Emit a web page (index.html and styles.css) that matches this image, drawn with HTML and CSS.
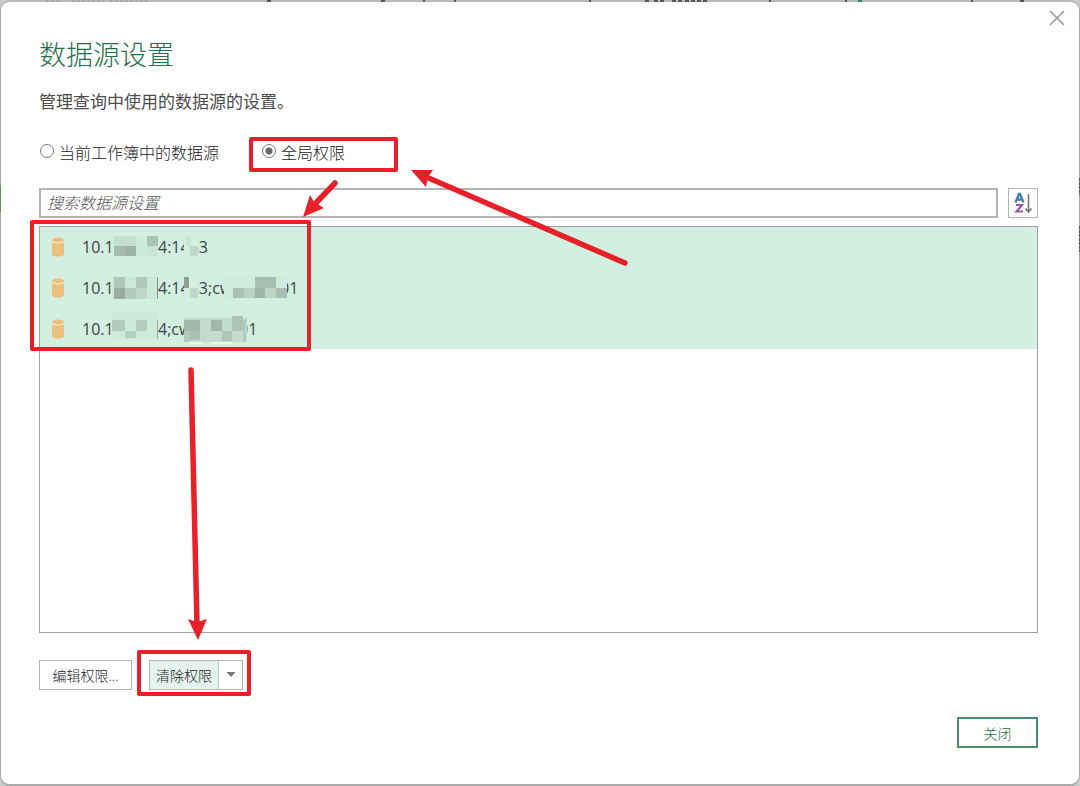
FILE: index.html
```
<!DOCTYPE html>
<html lang="zh-CN">
<head>
    <meta charset="UTF-8">
    <title>数据源设置</title>
    <link rel="stylesheet" href="styles.css">
</head>
<body>
    <main class="dialog">
        <button class="close-x" type="button" aria-label="关闭窗口">
            <svg width="16" height="16" viewBox="0 0 16 16"><path d="M1 1L15 15M15 1L1 15" stroke="#999" stroke-width="1.5" fill="none"/></svg>
        </button>

        <h1>数据源设置</h1>
        <p class="subtitle">管理查询中使用的数据源的设置。</p>

        <div class="scope">
            <label><input type="radio" name="scope" value="workbook"> 当前工作簿中的数据源</label>
            <label><input type="radio" name="scope" value="global" checked> 全局权限</label>
        </div>

        <div class="search">
            <input type="text" aria-label="搜索数据源设置" placeholder="搜索数据源设置">
            <button class="sort" type="button" aria-label="排序">
                <svg width="18" height="22" viewBox="0 0 18 22" fill="none">
                    <path d="M1.500 10.500L5 2H6L9.500 10.500M3 7.500H8" stroke="#4a80b5" stroke-width="2.400"/>
                    <path d="M2 13H8L2.500 19.500H9" stroke="#9556b0" stroke-width="2.200"/>
                    <path d="M14.500 2V19.500M11.500 16.500L14.500 20L17.500 16.500" stroke="#777" stroke-width="1.600"/>
                </svg>
            </button>
        </div>

        <div class="list">
            <ul class="sources">
                <li>
                    <svg class="db" width="14" height="20" viewBox="0 0 14 20"><path d="M1 3V17C1 20.500 13 20.500 13 17V3Z" fill="#ebc07c"/><ellipse cx="7" cy="3" rx="6" ry="2.500" fill="#ebc07c"/><path d="M1 4C3 6.600 11 6.600 13 4" stroke="#f6e2b8" stroke-width="1.300" fill="none"/></svg>
                    <span>10.1</span><span>4:1433</span>
                    <svg class="mosaic" width="190" height="32" viewBox="0 0 190 32">
                        <path d="M3 5H25V15H3Z" fill="#c5dfd1"/><path d="M3 15H25V25H3Z" fill="#a6bbae"/><path d="M14 15H25V25H14Z" fill="#9fb2a7"/>
                        <path d="M25 5H36V25H25Z" fill="#cdebdc"/><path d="M36 5H47V15H36Z" fill="#acc2b5"/><path d="M36 15H47V25H36Z" fill="#c8e4d6"/>
                        <path d="M73 4H87V27H73Z" fill="#d2efe1"/><path d="M79 15H87V25H79Z" fill="#bed8ca"/><path d="M75 5H80V15H75Z" fill="#c7e4d5"/>
                    </svg>
                </li>
                <li>
                    <svg class="db" width="14" height="20" viewBox="0 0 14 20"><path d="M1 3V17C1 20.500 13 20.500 13 17V3Z" fill="#ebc07c"/><ellipse cx="7" cy="3" rx="6" ry="2.500" fill="#ebc07c"/><path d="M1 4C3 6.600 11 6.600 13 4" stroke="#f6e2b8" stroke-width="1.300" fill="none"/></svg>
                    <span>10.1</span><span>4:1433;cw</span><span>01</span>
                    <svg class="mosaic" width="190" height="32" viewBox="0 0 190 32">
                        <path d="M1 5H47V27H1Z" fill="#cbe8da"/><path d="M3 5H14V16H3Z" fill="#afc5b9"/><path d="M3 16H14V27H3Z" fill="#9bada2"/><path d="M14 16H25V27H14Z" fill="#b3cbbd"/><path d="M25 5H36V16H25Z" fill="#b0c8bb"/><path d="M25 16H36V27H25Z" fill="#bdd7c9"/>
                        <path d="M46 5H47V27H46Z" fill="#82928a"/>
                        <path d="M73 4H87V27H73Z" fill="#d2efe1"/><path d="M73 5H78V16H73Z" fill="#8fa097"/><path d="M79 16H87V26H79Z" fill="#bdd7c9"/>
                        <path d="M113 4H176V27H113Z" fill="#d0ecde"/><path d="M122 16H133V26H122Z" fill="#aac0b3"/><path d="M133 16H144V26H133Z" fill="#bad2c5"/><path d="M144 5H165V16H144Z" fill="#a9beb2"/><path d="M144 16H154V26H144Z" fill="#a0b5a9"/><path d="M154 16H165V26H154Z" fill="#bcd5c8"/><path d="M165 16H176V26H165Z" fill="#a8beb1"/>
                    </svg>
                </li>
                <li class="short">
                    <svg class="db" width="14" height="20" viewBox="0 0 14 20"><path d="M1 3V17C1 20.500 13 20.500 13 17V3Z" fill="#ebc07c"/><ellipse cx="7" cy="3" rx="6" ry="2.500" fill="#ebc07c"/><path d="M1 4C3 6.600 11 6.600 13 4" stroke="#f6e2b8" stroke-width="1.300" fill="none"/></svg>
                    <span>10.1</span><span>4;cw</span><span>01</span>
                    <svg class="mosaic" width="190" height="32" viewBox="0 0 190 32">
                        <path d="M1 0H47V26H1Z" fill="#cdeadc"/><path d="M1 7H14V18H1Z" fill="#b2cabc"/><path d="M25 7H36V18H25Z" fill="#b5cdbf"/><path d="M14 18H25V25H14Z" fill="#b6cec1"/><path d="M46 7H47V26H46Z" fill="#98aaa0"/>
                        <path d="M73 5H136V29H73Z" fill="#c2dccf"/><path d="M73 7H89V18H73Z" fill="#a3b7ab"/><path d="M73 18H79V29H73Z" fill="#b1c8bb"/><path d="M79 18H89V27H79Z" fill="#a9bfb2"/><path d="M100 7H111V18H100Z" fill="#a2b6ab"/><path d="M111 18H121V28H111Z" fill="#aec5b8"/><path d="M121 3H132V18H121Z" fill="#aec4b8"/><path d="M132 7H135V29H132Z" fill="#b2cabd"/>
                        <path d="M78 29H91V31H78ZM100 29H122V31H100Z" fill="#e8f7ef"/>
                    </svg>
                </li>
            </ul>
        </div>

        <div class="actions">
            <button class="btn" type="button">编辑权限...</button>
            <div class="split">
                <button type="button" class="clear">清除权限</button>
                <button type="button" class="arrow" aria-label="更多清除选项"><svg width="10" height="6" viewBox="0 0 10 6"><path d="M0.500 0H9.500L5 5Z" fill="#777"/></svg></button>
            </div>
        </div>

        <div class="footer">
            <button class="btn-close" type="button">关闭</button>
        </div>

        <!-- sheet showing behind the dialog edges -->
        <svg class="marks" width="1080" height="786" viewBox="0 0 1080 786" fill="none" aria-hidden="true">
            <path d="M46 1H60M72 1H104M110 1H150" stroke="#999" stroke-width="1" stroke-dasharray="3 2"/>
            <path d="M267 1H271M381 1H385M424 0V2M455 0V2M590 0V2M645 1H649M654 1H664M672 1H682M685 1H708M770 0V2M846 0V2M972 0V2M1020 1H1024" stroke="#555" stroke-width="2" stroke-dasharray="4 2"/>
            <path d="M858 1H862" stroke="#2a8a68" stroke-width="2"/>
            <path d="M0.500 185V212" stroke="#5b9152"/>
            <path d="M1079.500 178V195M1079.500 226V252" stroke="#555" stroke-dasharray="3 1"/>
        </svg>

        <!-- red marks -->
        <svg class="marks" width="1080" height="786" viewBox="0 0 1080 786" fill="none" stroke="#e8202a" aria-hidden="true">
            <g stroke-width="4" stroke-linejoin="round">
                <path d="M251 139H396V170H251Z"/>
                <path d="M32 222H309V349H32Z"/>
                <path d="M139 652H249V694H139Z"/>
            </g>
            <g stroke-width="5.500" stroke-linecap="round">
                <path d="M335 183L314 205"/>
                <path d="M625 263L424 176"/>
                <path d="M191 370L197 624"/>
            </g>
            <g fill="#e8202a" stroke="none">
                <path d="M303 217L310 195L314 202L324 208Z"/>
                <path d="M411 170L433 170L428 177L426 187Z"/>
                <path d="M198 640L188 619L197 622L207 619Z"/>
            </g>
        </svg>
    </main>
</body>
</html>
```
FILE: styles.css
```
* {
    box-sizing: border-box;
}
body {
    margin: 0;
    background: #c9cdca;
    color: #444;
    font-family: "Open Sans", "Noto Sans CJK SC", sans-serif;
    font-size: 16px;
}
button, input {
    font-family: inherit;
    color: inherit;
}
button {
    padding: 0;
    background: #fff;
    border: 1px solid #b4b4b4;
    font-size: 14px;
}
svg {
    display: block;
}
.dialog {
    position: relative;
    display: flex;
    flex-direction: column;
    min-height: 100vh;
    padding: 35px 41px 36px 38px;
    background: #fff;
    border: 1px solid #aaa;
    border-top: 2px solid #b8b8b8;
    border-bottom-width: 2px;
    border-radius: 10px;
}
.close-x {
    position: absolute;
    top: 8px;
    right: 14px;
    border: 0;
}
h1 {
    margin: 0;
    color: #217346;
    font-size: 27px;
    font-weight: 300;
    line-height: 36px;
}
.subtitle {
    margin: 16px 0 0;
    color: #4c4c4c;
    font-size: 17px;
    line-height: 26px;
}
.scope {
    display: flex;
    gap: 42px;
    margin-top: 24px;
    color: #222;
    font-weight: 300;
    line-height: 28px;
}
.scope label {
    display: flex;
    align-items: center;
    gap: 5px;
}
.scope input {
    appearance: none;
    width: 14px;
    height: 14px;
    margin: 0 0 4px 1px;
    border: 1px solid #777;
    border-radius: 50%;
}
.scope input:checked {
    background: radial-gradient(circle, #666 3px, #fff 4px);
}
.search {
    display: flex;
    gap: 10px;
    margin-top: 21px;
}
.search input {
    flex: 1;
    min-width: 0;
    height: 30px;
    padding: 0 6px;
    border: 2px solid #b4b4b4;
    font-size: 16px;
    font-weight: 300;
}
.search input::placeholder {
    color: #555;
    font-style: italic;
}
.sort {
    display: flex;
    align-items: center;
    justify-content: center;
    width: 30px;
    height: 30px;
}
.list {
    flex: 1;
    margin-top: 8px;
    border: 1px solid #a0a0a0;
}
.sources {
    display: grid;
    gap: 1px;
    margin: 0;
    padding: 0;
    list-style: none;
    background: #d2efe1;
}
.sources li {
    position: relative;
    display: grid;
    grid-template-columns: 42px 76px 122px auto;
    align-items: center;
    height: 40px;
}
.sources .short {
    grid-template-columns: 42px 76px 81px auto;
}
.db {
    margin-left: 11px;
}
.mosaic {
    position: absolute;
    left: 71px;
    top: 4px;
}
.actions {
    display: flex;
    gap: 17px;
    margin-top: 27px;
}
.btn {
    width: 93px;
    height: 30px;
    color: #222;
    font-weight: 300;
}
.split {
    display: flex;
    border: 1px solid #b4b4b4;
}
.split button {
    height: 28px;
    border: 0;
}
.split .clear {
    width: 69px;
    background: #e4f4ec;
    border-right: 1px solid #a9d3bd;
    color: #222;
    font-weight: 300;
}
.split .arrow {
    display: flex;
    align-items: center;
    justify-content: center;
    width: 23px;
}
.footer {
    display: flex;
    justify-content: flex-end;
    margin-top: 27px;
}
.btn-close {
    width: 81px;
    height: 31px;
    border: 2px solid #4a8f6b;
    color: #217346;
    font-weight: 300;
}
.marks {
    position: absolute;
    top: -2px;
    left: -1px;
    pointer-events: none;
}
```
